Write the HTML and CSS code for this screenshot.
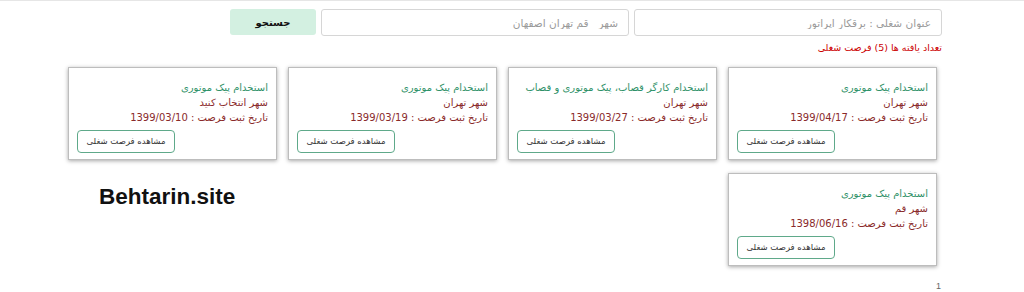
FILE: index.html
```html
<!DOCTYPE html>
<html lang="fa" dir="rtl">
<head>
<meta charset="utf-8">
<title>فرصت شغلی</title>
<link rel="stylesheet" href="styles.css">
</head>
<body>
<div class="page">
  <div class="wrap">
    <form class="search">
      <input class="field" type="text" placeholder="عنوان شغلی : برقکار اپراتور">
      <input class="field" type="text" placeholder="شهر   قم تهران اصفهان">
      <button class="btn-search" type="button">جستجو</button>
    </form>
    <div class="count">تعداد یافته ها (5) فرصت شغلی</div>
    <div class="cards">
      <div class="card">
        <div class="title">استخدام پیک موتوری</div>
        <div class="city">شهر تهران</div>
        <div class="date">تاریخ ثبت فرصت : 1399/04/17</div>
        <a class="btn-view">مشاهده فرصت شغلی</a>
      </div>
      <div class="card">
        <div class="title">استخدام کارگر قصاب، پیک موتوری و قصاب</div>
        <div class="city">شهر تهران</div>
        <div class="date">تاریخ ثبت فرصت : 1399/03/27</div>
        <a class="btn-view">مشاهده فرصت شغلی</a>
      </div>
      <div class="card">
        <div class="title">استخدام پیک موتوری</div>
        <div class="city">شهر تهران</div>
        <div class="date">تاریخ ثبت فرصت : 1399/03/19</div>
        <a class="btn-view">مشاهده فرصت شغلی</a>
      </div>
      <div class="card">
        <div class="title">استخدام پیک موتوری</div>
        <div class="city">شهر انتخاب کنید</div>
        <div class="date">تاریخ ثبت فرصت : 1399/03/10</div>
        <a class="btn-view">مشاهده فرصت شغلی</a>
      </div>
      <div class="card">
        <div class="title">استخدام پیک موتوری</div>
        <div class="city">شهر قم</div>
        <div class="date">تاریخ ثبت فرصت : 1398/06/16</div>
        <a class="btn-view">مشاهده فرصت شغلی</a>
      </div>
    </div>
    <div class="pager">1</div>
  </div>
  <div class="watermark" dir="ltr">Behtarin.site</div>
</div>
</body>
</html>
```
FILE: styles.css
```css
html, body {
  margin: 0;
  padding: 0;
  background: #fff;
}
body {
  font-family: "DejaVu Sans", "Liberation Sans", sans-serif;
  font-size: 11px;
  color: #333;
}
.page {
  position: relative;
  height: 292px;
  overflow: hidden;
  border-top: 1px solid #e6e6e6;
}
.wrap {
  width: 880px;
  margin-right: 82px;
  box-sizing: border-box;
}
.search {
  display: flex;
  gap: 5px;
  margin: 8px 0 0 0;
  height: 27px;
}
.field {
  width: 308px;
  height: 27px;
  box-sizing: border-box;
  border: 1px solid #d6d6d6;
  border-radius: 3px;
  padding: 0 10px;
  font-family: "DejaVu Sans", sans-serif;
  font-size: 10.5px;
  color: #555;
  background: #fff;
  direction: rtl;
}
.field::placeholder {
  color: #9a9a9a;
}
.btn-search {
  width: 86px;
  height: 26px;
  border: none;
  border-radius: 3px;
  background: #d3f0e1;
  font-family: "DejaVu Sans", sans-serif;
  font-weight: bold;
  font-size: 10px;
  color: #111;
}
.count {
  color: #cc0000;
  font-size: 9.5px;
  margin-top: 5px;
  height: 14px;
  line-height: 14px;
}
.cards {
  display: flex;
  flex-wrap: wrap;
  gap: 13px 11px;
  padding: 0 5px;
  margin-top: 12px;
}
.card {
  width: 209px;
  height: 93px;
  box-sizing: border-box;
  border: 1px solid #bdbdbd;
  box-shadow: 0 1px 4px rgba(0,0,0,0.35);
  background: #fff;
  padding: 12px 8px 6px 8px;
  display: flex;
  flex-direction: column;
}
.title, .city, .date {
  line-height: 15px;
  font-size: 10px;
  white-space: nowrap;
}
.title {
  color: #2f9168;
}
.city {
  color: #8a2a2a;
}
.date {
  color: #8a2a2a;
}
.btn-view {
  align-self: flex-end;
  margin-top: 5px;
  width: 98px;
  height: 23px;
  box-sizing: border-box;
  border: 1px solid #5fa98a;
  border-radius: 4px;
  font-size: 8.5px;
  line-height: 21px;
  text-align: center;
  color: #333;
}
.pager {
  margin-top: 14px;
  margin-right: 1px;
  font-size: 9px;
  line-height: 12px;
  color: #666;
  font-family: "Liberation Sans", sans-serif;
}
.watermark {
  position: absolute;
  left: 99px;
  top: 183px;
  font-family: "Liberation Sans", Arial, sans-serif;
  font-weight: bold;
  font-size: 22.5px;
  color: #111;
}
```
